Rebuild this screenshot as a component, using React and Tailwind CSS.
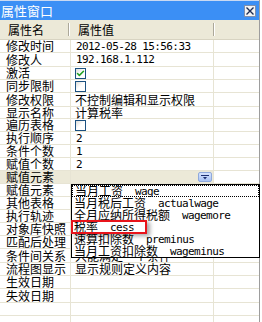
import { Check } from 'lucide-react';

const rows = [
  { name: '修改时间', value: '2012-05-28 15:56:33', latin: true, h: 'h-[13px]' },
  { name: '修改人', value: '192.168.1.112', latin: true, h: 'h-[14px]' },
  { name: '激活', check: true, h: 'h-[13px]' },
  { name: '同步限制', check: false, h: 'h-[13px]' },
  { name: '修改权限', value: '不控制编辑和显示权限', h: 'h-[14px]' },
  { name: '显示名称', value: '计算税率', h: 'h-[12px]' },
  { name: '遍历表格', check: false, h: 'h-[13px]' },
  { name: '执行顺序', value: '2', latin: true, h: 'h-[13px]' },
  { name: '条件个数', value: '1', latin: true, h: 'h-[13px]' },
  { name: '赋值个数', value: '2', latin: true, h: 'h-[13px]' },
  { name: '赋值元素', group: true, h: 'h-[13px]' },
  { name: '赋值元素', h: 'h-[13px]' },
  { name: '其他表格', h: 'h-[13px]' },
  { name: '执行轨迹', h: 'h-[13px]' },
  { name: '对象库快照', h: 'h-[13px]' },
  { name: '匹配后处理', h: 'h-[13px]' },
  { name: '条件间关系', value: '只能满足一个条件', h: 'h-[14px]' },
  { name: '流程图显示', value: '显示规则定义内容', h: 'h-[13px]' },
  { name: '生效日期', h: 'h-[13px]' },
  { name: '失效日期', h: 'h-[14px]' },
  { name: '', h: 'h-[13px]' },
  { name: '', h: 'h-[13px]' },
];

const options = [
  ['当月工资', 'wage'],
  ['当月税后工资', 'actualwage'],
  ['全月应纳所得税额', 'wagemore'],
  ['税率', 'cess'],
  ['速算扣除数', 'preminus'],
  ['当月工资扣除数', 'wageminus'],
];

const mono = "font-['DejaVu_Sans_Mono',monospace] text-[11px] tracking-[-0.6px]";

function CheckBox({ checked }) {
  return (
    <div className="w-[11px] h-[11px] border border-[#1c5180] bg-gradient-to-br from-[#dcdcd7] via-white to-white flex items-center justify-center">
      {checked && <Check className="w-[9px] h-[9px] text-[#21a121]" strokeWidth={4} />}
    </div>
  );
}

export default function App() {
  return (
    <div className="w-[262px] h-[322px] overflow-hidden bg-white relative font-['Noto_Sans_CJK_SC',sans-serif] text-[12px] text-black">
      <div className="w-[260px] h-full border-r border-[#9d9d9d] flex flex-col">
        {/* Title bar */}
        <div className="h-[20px] shrink-0 bg-[#3b8ff5] border-t border-[#c9d9f2] flex items-center justify-between pr-[3px]">
          <span className="text-white text-[13px] leading-[19px] pl-[1px]">属性窗口</span>
          <div className="w-[12px] h-[12px] bg-[#f4f4f4] border border-[#7d8fb0] flex items-center justify-center">
            <svg width="8" height="8" viewBox="0 0 8 8">
              <path d="M0.5 0.5L7.5 7.5M7.5 0.5L0.5 7.5" stroke="#1e2d55" strokeWidth="1.4" />
            </svg>
          </div>
        </div>

        {/* Header */}
        <div className="h-[20px] shrink-0 bg-[#ece9d8] border-b border-[#d8d4c2] flex items-center">
          <div className="w-[68px] pl-[8px] leading-[20px]">属性名</div>
          <div className="w-[2px] h-[13px] border-l border-[#aca899] border-r border-r-white" />
          <div className="w-[143px] pl-[8px] leading-[20px]">属性值</div>
          <div className="w-[2px] h-[13px] border-l border-[#aca899] border-r border-r-white" />
        </div>

        {/* Rows */}
        <div className="flex flex-col">
          {rows.map((row, i) => (
            <div key={i} className={`${row.h} shrink-0 flex border-b border-[#e7e4d4]`}>
              <div className={`w-[71px] pl-[6px] border-r border-[#e7e4d4] flex items-center leading-none whitespace-nowrap ${row.group ? 'bg-[#ece9d8]' : ''}`}>
                {row.name}
              </div>
              <div className={`w-[143px] pl-[4px] border-r border-[#e7e4d4] flex items-center leading-none whitespace-nowrap ${row.group ? 'bg-[#ece9d8] justify-end pr-[1px]' : ''}`}>
                {row.check !== undefined && <CheckBox checked={row.check} />}
                {row.value && (
                  <span className={row.latin ? `${mono} pl-[1px]` : ''}>{row.value}</span>
                )}
                {row.group && (
                  <div className="w-[14px] h-[10px] rounded-[2px] bg-gradient-to-b from-[#d6e3fd] to-[#a9c3f5] border border-[#8fa9dc] flex items-center justify-center">
                    <svg width="8" height="5" viewBox="0 0 8 5">
                      <path d="M0 0.5H8" stroke="#1d2f6f" strokeWidth="1" />
                      <path d="M2 2H6L4 4.5Z" fill="#1d2f6f" />
                    </svg>
                  </div>
                )}
              </div>
              <div className="flex-1" />
            </div>
          ))}
        </div>
      </div>

      {/* Dropdown list */}
      <div className="absolute left-[71px] top-[184px] w-[189px] bg-white border border-black flex flex-col">
        {options.map(([cn, en], i) => (
          <div
            key={en}
            className={`h-[12px] flex items-center pl-[2px] whitespace-nowrap leading-none ${i === 0 ? 'border border-dotted border-black pl-[1px]' : ''}`}
          >
            <span>{cn}</span>
            <span className={`${mono} ml-[12px]`}>{en}</span>
          </div>
        ))}
      </div>

      {/* Red annotation box */}
      <div className="absolute left-[71px] top-[220px] w-[76px] h-[14px] border-2 border-[#e8141b] shadow-[3px_2px_4px_rgba(0,0,0,0.35)]" />
    </div>
  );
}
